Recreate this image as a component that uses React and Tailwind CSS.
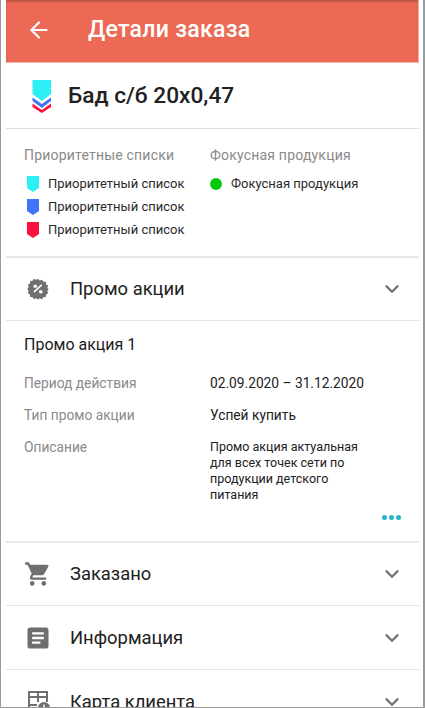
import React from 'react';
import { ChevronDown, ArrowLeft } from 'lucide-react';
import { MdShoppingCart, MdArticle } from 'react-icons/md';

const font = { fontFamily: 'Roboto, sans-serif' };

const Flag = ({ color }) => (
  <svg width="12" height="16" viewBox="0 0 12 16" className="shrink-0">
    <path d="M0 0H12V12L6 16L0 12Z" fill={color} />
  </svg>
);

const ListMark = () => (
  <svg width="20" height="33" viewBox="0 0 20 33" className="shrink-0">
    <path d="M0.5 0H19V14L9.8 21L0.5 14Z" fill="#2cf0f6" />
    <path d="M0.5 17.5L9.8 24L19 17.5V21L9.8 28L0.5 21Z" fill="#3f74f6" />
    <path d="M0.5 23.5L9.8 30L19 23.5V27L9.8 33L0.5 27Z" fill="#fb0f3c" />
  </svg>
);

const PromoIcon = () => (
  <svg width="22" height="22" viewBox="0 0 24 24">
    <path
      d="M12 1l2 1.8 2.5-1 1.3 2.3 2.7.1.3 2.7 2.3 1.4-1 2.5L23.7 12l-1.600 2.200 1 2.500-2.300 1.400-.3 2.700-2.700.1-1.300 2.300-2.500-1L12 23.500l-2-1.300-2.500 1-1.300-2.300-2.700-.1-.3-2.700-2.300-1.400 1-2.500L.3 12l1.600-2.200-1-2.500 2.300-1.400.3-2.700 2.700-.1 1.300-2.300 2.500 1z"
      fill="#6f6f6f"
    />
    <circle cx="9" cy="9" r="2" fill="#fff" />
    <circle cx="15" cy="15" r="2" fill="#fff" />
    <path d="M7.500 15.500L16 7.500" stroke="#fff" strokeWidth="1.800" />
  </svg>
);

const CardIcon = () => (
  <svg width="24" height="24" viewBox="0 0 24 24">
    <path
      d="M2 1h20v11h-2V8h-7v4h-2V8H4v6h7v2H4v6h7v2H2zM4 3v3h7V3zm9 0v3h7V3z"
      fill="#6f6f6f"
    />
    <circle cx="18" cy="18" r="6" fill="#6f6f6f" />
    <path d="M18 14.500V18.500H21" stroke="#fff" strokeWidth="1.500" fill="none" />
  </svg>
);

const Section = ({ icon, title, className }) => (
  <div className={`flex items-center pl-[20px] pr-[16px] ${className}`}>
    <div className="w-[24px] h-[24px] flex items-center justify-center shrink-0">{icon}</div>
    <span className="ml-[20px] text-[18.4px] leading-[24px] text-[#212121] flex-1">{title}</span>
    <ChevronDown size={22} strokeWidth={2.500} color="#6f6f6f" />
  </div>
);

const PriorityRow = ({ color }) => (
  <div className="flex items-center h-[23px] pl-[3px]">
    <Flag color={color} />
    <span className="ml-[9px] text-[13px] text-[#2a2a2a]">Приоритетный список</span>
  </div>
);

const Detail = ({ label, children, className }) => (
  <div className={`flex ${className}`}>
    <div className="w-[186px] shrink-0 text-[13.75px] leading-[20px] text-[#8a8a8a]">{label}</div>
    {children}
  </div>
);

export default function App() {
  return (
    <div style={font} className="w-[425px] h-[708px] overflow-hidden bg-white border-l border-r-2 border-b border-[#9a9a9a] pl-[5px] pr-[4px]">
      <header className="h-[63px] bg-[#ec6a55] flex items-center pl-[20px] pb-[2px] border-b border-r border-[#f7b3a6] shadow-[inset_0_2px_2px_rgba(0,0,0,0.2)]">
        <ArrowLeft size={26} strokeWidth={2} color="#fff" />
        <h1 className="ml-[36px] text-[23px] font-medium text-white tracking-[0.3px]">Детали заказа</h1>
      </header>

      <div className="h-[66px] flex items-center pl-[26px] pt-[1px] border-b border-[#dedede]">
        <ListMark />
        <span className="ml-[16px] text-[22.7px] font-medium text-[#212121]">Бад с/б 20х0,47</span>
      </div>

      <div className="h-[129px] flex pl-[18px] pt-[18px] border-b-2 border-[#e8e8e8]">
        <div className="w-[186px] shrink-0">
          <div className="text-[14px] leading-[16px] tracking-[0.2px] text-[#8a8a8a] mb-[9px]">Приоритетные списки</div>
          <PriorityRow color="#2cf0f6" />
          <PriorityRow color="#3f74f6" />
          <PriorityRow color="#fb0f3c" />
        </div>
        <div>
          <div className="text-[14px] leading-[16px] tracking-[0.2px] text-[#8a8a8a] mb-[9px]">Фокусная продукция</div>
          <div className="flex items-center h-[23px]">
            <span className="w-[12px] h-[12px] rounded-full bg-[#0ac80a]" />
            <span className="ml-[9px] text-[13px] text-[#2a2a2a]">Фокусная продукция</span>
          </div>
        </div>
      </div>

      <Section icon={<PromoIcon />} title="Промо акции" className="h-[63px] border-b border-[#e4e4e4]" />

      <div className="h-[222px] pl-[18px] pt-[13px] border-b-2 border-[#e8e8e8]">
        <div className="text-[16px] leading-[22px] text-[#212121]">Промо акция 1</div>
        <Detail label="Период действия" className="mt-[17px]">
          <span className="text-[13.75px] leading-[20px] text-[#212121]">02.09.2020 – 31.12.2020</span>
        </Detail>
        <Detail label="Тип промо акции" className="mt-[12px]">
          <span className="text-[13.75px] leading-[20px] text-[#212121]">Успей купить</span>
        </Detail>
        <Detail label="Описание" className="mt-[12px]">
          <span className="w-[156px] pt-[2px] text-[12.5px] leading-[16px] text-[#212121]">
            Промо акция актуальная для всех точек сети по продукции детского питания
          </span>
        </Detail>
        <div className="flex justify-end gap-[2px] pr-[18px] mt-[12px]">
          <span className="w-[5px] h-[5px] rounded-full bg-[#27b4cf]" />
          <span className="w-[5px] h-[5px] rounded-full bg-[#27b4cf]" />
          <span className="w-[5px] h-[5px] rounded-full bg-[#27b4cf]" />
        </div>
      </div>

      <Section icon={<MdShoppingCart size={28} color="#6f6f6f" className="shrink-0 -ml-[1px]" />} title="Заказано" className="h-[63px] border-b border-[#e4e4e4]" />
      <Section icon={<MdArticle size={28} color="#6f6f6f" className="shrink-0" />} title="Информация" className="h-[64px] border-b border-[#e4e4e4]" />
      <Section icon={<CardIcon />} title="Карта клиента" className="h-[64px]" />
    </div>
  );
}
